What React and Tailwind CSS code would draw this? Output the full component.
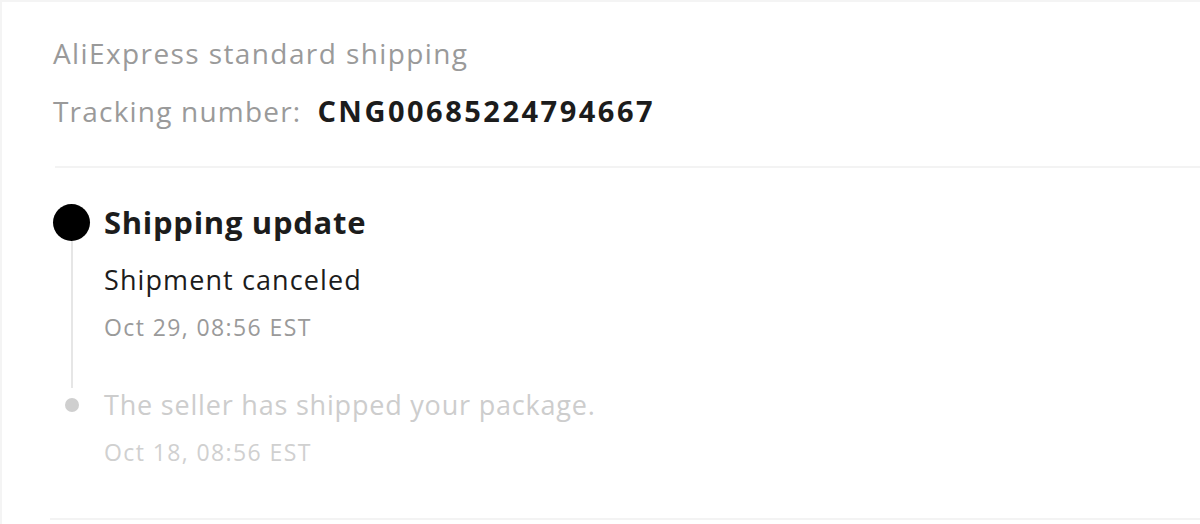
export default function App() {
  const font = { fontFamily: '"Open Sans", "Lato", sans-serif' };
  return (
    <div
      className="w-[1200px] h-[524px] overflow-hidden bg-white border-t-2 border-l-2 border-[#f4f4f4] antialiased"
      style={font}
    >
      <div className="pl-[51px] pt-[34px]">
        <div className="h-[34px] leading-[34px] text-[28px] tracking-[1.4px] text-[#9a9a9a]">
          AliExpress standard shipping
        </div>
        <div className="mt-[24px] h-[34px] leading-[34px] text-[#9a9a9a] flex items-center">
          <span className="text-[28px] tracking-[1.2px]">Tracking number:</span>
          <span className="ml-[16px] text-[29px] tracking-[2.5px] font-bold text-[#1c1c1c]">
            CNG00685224794667
          </span>
        </div>
      </div>
      <div className="mt-[38px] ml-[53px] border-t-2 border-[#f3f3f3]" />
      <div className="pl-[51px] pt-[36px]">
        <div className="flex">
          <div className="w-[37px] flex flex-col items-center shrink-0">
            <div className="w-[37px] h-[37px] rounded-full bg-black shrink-0" />
            <div className="w-[2px] flex-1 bg-[#e6e6e6]" />
          </div>
          <div className="ml-[14px] pb-[46px]">
            <div className="h-[37px] leading-[37px] text-[31px] tracking-[0.7px] font-bold text-[#1c1c1c]">
              Shipping update
            </div>
            <div className="mt-[22px] h-[34px] leading-[34px] text-[27px] tracking-[1.1px] text-[#1c1c1c]">
              Shipment canceled
            </div>
            <div className="mt-[15px] h-[30px] leading-[30px] text-[23px] tracking-[1.4px] text-[#9a9a9a]">
              Oct 29, 08:56 EST
            </div>
          </div>
        </div>
        <div className="flex">
          <div className="w-[37px] h-[34px] flex items-center justify-center shrink-0">
            <div className="w-[14px] h-[14px] rounded-full bg-[#cfcfcf]" />
          </div>
          <div className="ml-[14px]">
            <div className="h-[34px] leading-[34px] text-[27px] tracking-[0.8px] text-[#cdcdcd]">
              The seller has shipped your package.
            </div>
            <div className="mt-[15px] h-[30px] leading-[30px] text-[23px] tracking-[1.4px] text-[#d0d0d0]">
              Oct 18, 08:56 EST
            </div>
          </div>
        </div>
      </div>
      <div className="mt-[51px] ml-[48px] border-t-2 border-[#f3f3f3]" />
    </div>
  );
}
